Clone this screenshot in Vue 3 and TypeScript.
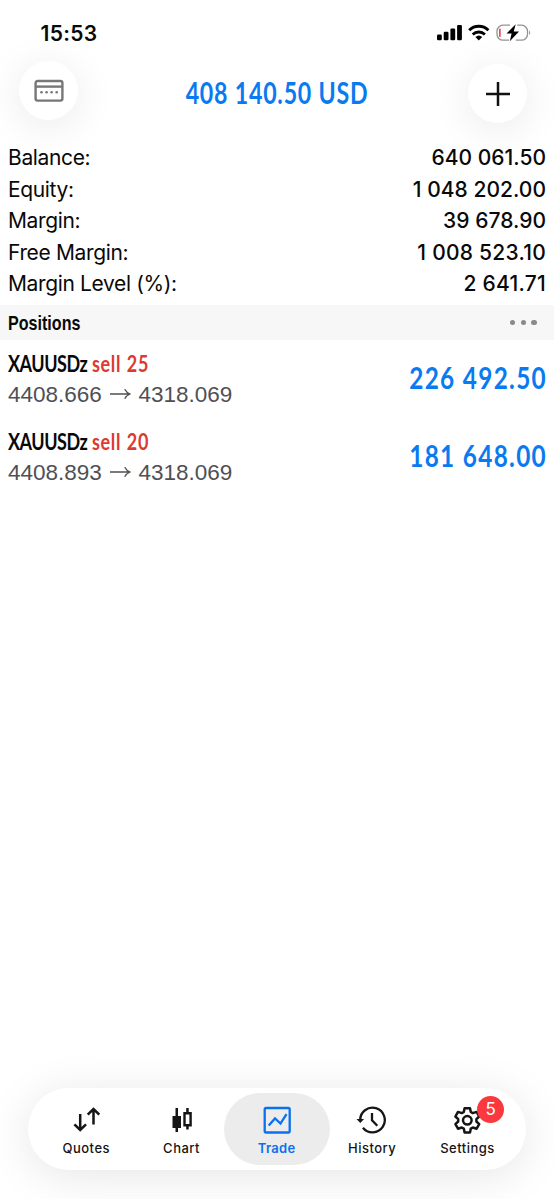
<script setup lang="ts">
interface SummaryRow { label: string; value: string; id: string }
interface Position { symbol: string; side: string; open: string; current: string; profit: string; id: string }

const summary: SummaryRow[] = [
  { id: 'balance', label: 'Balance:', value: '640 061.50' },
  { id: 'equity', label: 'Equity:', value: '1 048 202.00' },
  { id: 'margin', label: 'Margin:', value: '39 678.90' },
  { id: 'free', label: 'Free Margin:', value: '1 008 523.10' },
  { id: 'level', label: 'Margin Level (%):', value: '2 641.71' },
]

const positions: Position[] = [
  { id: 'p1', symbol: 'XAUUSDz', side: 'sell 25', open: '4408.666', current: '4318.069', profit: '226 492.50' },
  { id: 'p2', symbol: 'XAUUSDz', side: 'sell 20', open: '4408.893', current: '4318.069', profit: '181 648.00' },
]
</script>

<template>
  <div class="screen">
    <header class="status">
      <span class="clock">15:53</span>
      <svg class="status-icons" width="98" height="20" viewBox="0 0 98 20">
        <rect x="1" y="11.5" width="4.8" height="5.8" rx="1.2" />
        <rect x="7.7" y="8.7" width="4.8" height="8.6" rx="1.2" />
        <rect x="14.4" y="5.5" width="4.8" height="11.8" rx="1.2" />
        <rect x="21.1" y="2" width="4.8" height="15.3" rx="1.2" />
        <g fill="none" stroke="#000" stroke-width="2.9">
          <path d="M33.2 7.2A13.8 13.8 0 0 1 52.4 7.2" />
          <path d="M36.7 11.5A8.8 8.8 0 0 1 48.9 11.5" />
        </g>
        <path d="M39.4 14a5 5 0 0 1 6.8 0L42.8 17.5z" />
        <g fill="none" stroke="#949496" stroke-width="1.3">
          <path d="M74 2.2H67A6 6 0 0 0 61 8.200V11.200A6 6 0 0 0 67 17.200H73" />
          <path d="M81.200 2.200H85.500A6 6 0 0 1 91.500 8.200V11.200A6 6 0 0 1 85.500 17.200H79.800" />
        </g>
        <path d="M93.100 7.200q2.300 2.500 0 5z" fill="#949496" />
        <rect x="63" y="5.500" width="1.700" height="8.600" rx=".8" fill="#f04a51" />
        <path d="M79.700 1.300L70.500 10.500H75.600L73.800 18.200L83 8.600H77.700z" />
      </svg>
    </header>

    <div class="toolbar">
      <button class="round left" aria-label="Accounts">
        <svg width="30" height="24" viewBox="0 0 30 24" fill="none" stroke="#777" stroke-width="2.400">
          <rect x="1.600" y="2" width="26.800" height="19.600" rx="2" />
          <path d="M2 7.600H28" />
          <g fill="#777" stroke="none">
            <circle cx="7.500" cy="13.300" r="1.300" /><circle cx="12.600" cy="13.300" r="1.300" />
            <circle cx="17.600" cy="13.300" r="1.300" /><circle cx="22.700" cy="13.300" r="1.300" />
          </g>
        </svg>
      </button>
      <h1 class="total">408 140.50 USD</h1>
      <button class="round right" aria-label="New order">
        <svg width="24" height="24" viewBox="0 0 24 24" stroke="#111" stroke-width="2.500"><path d="M0 12H24M12 0V24" /></svg>
      </button>
    </div>

    <section class="summary">
      <div v-for="row in summary" :key="row.id" class="summary-row">
        <span class="label">{{ row.label }}</span>
        <span class="value" :class="row.id">{{ row.value }}</span>
      </div>
    </section>

    <div class="section-bar">
      <h2>Positions</h2>
      <span class="dots"><i /><i /><i /></span>
    </div>

    <main>
      <article v-for="p in positions" :key="p.id" class="position">
        <div class="details">
          <div class="title"><span class="name">{{ p.symbol }} <b>{{ p.side }}</b></span></div>
          <div class="prices">
            <span>{{ p.open }}</span>
            <svg width="21" height="12" viewBox="0 0 21 12" fill="none" stroke="#505053" stroke-width="1.300">
              <path d="M0 5H19.500M14.700 .2Q16.500 3.600 20 5Q16.500 6.400 14.700 9.800" />
            </svg>
            <span>{{ p.current }}</span>
          </div>
        </div>
        <span class="profit">{{ p.profit }}</span>
      </article>
    </main>

    <nav class="tabs">
      <a class="tab">
        <svg width="32" height="30" viewBox="0 0 32 30" fill="none" stroke="#151515" stroke-width="2.500">
          <path d="M10.200 8V23.500M4.400 18.300L10.200 24L16 18.300M23.500 18.500V3.500M17.700 8.700L23.500 3L29.300 8.700" />
        </svg>
        <span>Quotes</span>
      </a>
      <a class="tab">
        <svg width="32" height="30" viewBox="0 0 32 30" fill="#151515">
          <path d="M10.500 2H13V10H16V22H13V26H10.500V22H7.500V10H10.500z" />
          <path fill-rule="evenodd" d="M21.200 2H23.700V6H26.800V20.500H23.700V23.500H21.200V20.500H18.300V6H21.200zM20.700 8.500V18H24.400V8.500z" />
        </svg>
        <span>Chart</span>
      </a>
      <a class="tab active">
        <svg width="32" height="30" viewBox="0 0 32 30" fill="none" stroke="#0a70eb" stroke-width="2.300">
          <rect x="3.700" y="2" width="25" height="24.500" rx="1.500" />
          <path d="M7.700 19.500L14 12.500L19.500 17.500L25.500 8.200" />
        </svg>
        <span>Trade</span>
      </a>
      <a class="tab">
        <svg width="32" height="30" viewBox="0 0 32 30" fill="none" stroke="#151515" stroke-width="2.300">
          <path d="M4.200 14.300A12.300 12.300 0 1 1 6.900 21.700" />
          <path d="M16 7V14.300L21.300 19.700" />
          <path d="M.5 13H8.100L4.300 17z" fill="#151515" stroke="none" />
        </svg>
        <span>History</span>
      </a>
      <a class="tab">
        <svg width="32" height="30" viewBox="0 0 32 30" fill="none" stroke="#151515" stroke-width="2.500" stroke-linejoin="round">
          <path d="M13.600 2.200H19L19.800 6L21.800 7.100L25.600 5.900L28.200 10.500L25.400 13.100V15.500L28.200 18.100L25.600 22.700L21.800 21.500L19.800 22.600L19 26.400H13.600L12.800 22.600L10.800 21.500L7 22.700L4.400 18.100L7.200 15.500V13.100L4.400 10.500L7 5.900L10.800 7.100L12.800 6z" />
          <circle cx="16.300" cy="14.300" r="4.300" />
        </svg>
        <em class="badge">5</em>
        <span>Settings</span>
      </a>
    </nav>
  </div>
</template>

<style>
body { margin: 0; background: #fff; }
</style>

<style scoped>
* { box-sizing: border-box; }
.screen {
  width: 554px; height: 1199px; overflow: hidden; display: flex; flex-direction: column;
  background: #fff; color: #090909; font-family: Inter, "Liberation Sans", sans-serif;
}
.status { height: 60px; flex: none; display: flex; justify-content: space-between; padding: 22px 20px 0 40.5px; }
.clock { font-size: 21px; line-height: 24px; font-weight: 600; letter-spacing: .3px; }
.status-icons { margin-top: 1px; }
.toolbar { height: 81px; flex: none; display: flex; align-items: flex-start; justify-content: space-between; padding: 1px 27px 0 19px; }
.round {
  width: 59px; height: 59px; border: 0; border-radius: 50%; padding: 0; background: #fff; flex: none;
  display: flex; align-items: center; justify-content: center; box-shadow: 0 6px 42px rgba(0, 0, 0, .09);
}
.round.right { margin-top: 3px; }
.total {
  margin: 14px 0 0 7px; font: 700 29.500px/36px Lato, sans-serif; color: #097aef; white-space: nowrap;
  width: 240px; text-align: center; letter-spacing: 1px; transform: scaleX(.785);
}
.summary { height: 164px; flex: none; padding: 1px 8px 0; }
.summary-row { height: 31.600px; display: flex; justify-content: space-between; font-size: 21px; line-height: 32px; }
.label { letter-spacing: -.36px; }
.value { font-weight: 450; letter-spacing: .03px; }
.value.free, .value.level { letter-spacing: .25px; }
.section-bar { height: 35px; flex: none; background: #f7f7f7; display: flex; align-items: center; justify-content: space-between; padding: 0 17px 0 8px; }
h2 { margin: 0; font: 700 20.500px/36px "Liberation Sans", sans-serif; transform: scaleX(.785); transform-origin: left; }
.dots { display: flex; gap: 5.200px; }
.dots i { width: 5.600px; height: 5.600px; border-radius: 50%; background: #8a8a8d; }
main { flex: 1; }
.position { height: 77.500px; padding: 9px 8px 0; display: flex; justify-content: space-between; }
.details { width: 260px; }
.title { height: 30px; font: 700 22.500px/30px Lato, sans-serif; }
.name { display: inline-block; white-space: nowrap; letter-spacing: -.6px; word-spacing: 1px; transform: scaleX(.8); transform-origin: left; }
.title b { font-weight: 700; color: #dd3a31; letter-spacing: .8px; }
.prices { display: flex; align-items: center; gap: 7.800px; height: 32px; font: 22.500px/32px "Liberation Sans", sans-serif; color: #505053; }
.profit { font: 700 29.500px/36px Lato, sans-serif; margin-top: 11px; color: #097aef; letter-spacing: 1.600px; margin-right: -1px; transform: scaleX(.825); transform-origin: right; white-space: nowrap; }
.tabs {
  width: 498px; height: 82px; flex: none; margin: 0 0 29px 28px; border-radius: 41px; background: #fff;
  display: flex; align-items: center; padding: 0 6px 0 5px; box-shadow: 0 6px 46px rgba(0, 0, 0, .1);
}
.tab {
  position: relative; width: 106px; height: 72px; margin-right: -10.700px; flex: none; border-radius: 36px;
  display: flex; flex-direction: column; align-items: center; padding-top: 13px; color: #151515;
}
.tab svg { flex: none; }
.tab span { font-size: 13px; line-height: 18px; margin-top: 3px; font-weight: 500; letter-spacing: .5px; padding-left: .5px; }
.tab.active { background: #ececec; color: #0a70eb; }
.tab.active span { font-weight: 600; letter-spacing: .3px; padding-left: 0; }
.badge {
  position: absolute; left: 63px; top: 3px; width: 27px; height: 27px; border-radius: 50%; background: #fa383e;
  color: #fff; font-style: normal; font-size: 17px; line-height: 27px; text-align: center;
}
</style>
